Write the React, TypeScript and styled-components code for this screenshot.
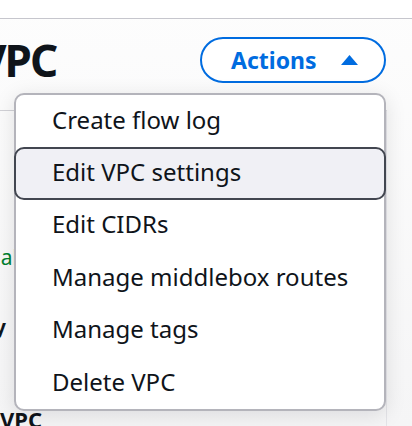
import styled, { createGlobalStyle } from 'styled-components'

const GlobalStyle = createGlobalStyle`
  html, body {
    margin: 0;
    padding: 0;
  }
  body {
    background: #f8f8f9;
    font-family: "Noto Sans", "Open Sans", sans-serif;
    color: #0f141a;
    overflow: hidden;
  }
`

const Page = styled.div`
  position: relative;
  width: 412px;
  height: 426px;
  overflow: hidden;
  background: linear-gradient(180deg, #fdfdfd 0%, #f5f5f6 100%);
`

const TopBar = styled.div`
  height: 18px;
  background: #ffffff;
  border-bottom: 1px solid #c6c6cd;
`

const HeaderRow = styled.div`
  display: flex;
  align-items: center;
  justify-content: space-between;
  height: 82px;
  padding-right: 26px;
`

const Title = styled.h1`
  margin: 0 0 0 -22px;
  font-size: 44px;
  font-weight: 700;
  letter-spacing: -2px;
  line-height: 1;
`

const ActionsButton = styled.button`
  display: flex;
  align-items: center;
  gap: 24px;
  box-sizing: border-box;
  width: 186px;
  height: 46px;
  padding: 0 0 0 29px;
  border: 2px solid #006ce0;
  border-radius: 23px;
  background: #ffffff;
  color: #006ce0;
  font-family: inherit;
  font-size: 23px;
  font-weight: 700;
`

const Caret = styled.svg`
  width: 17px;
  height: 10px;
`

const Panel = styled.div`
  margin: 9px 25px 0 0;
  height: 400px;
  border-top: 1px solid #d1d1d6;
  border-right: 1px solid #e4e4e8;
  display: flex;
  flex-direction: column;
`

const Status = styled.div`
  margin: 132px 0 0 -46px;
  font-size: 21px;
  color: #00802f;
  white-space: nowrap;
`

const Value = styled.div`
  margin: 42px 0 0 -76px;
  font-size: 20px;
  font-weight: 700;
  white-space: nowrap;
`

const SectionTitle = styled.div`
  margin: 64px 0 0 0;
  font-size: 22px;
  font-weight: 700;
  white-space: nowrap;
`

const Menu = styled.ul`
  position: absolute;
  top: 93px;
  left: 14px;
  box-sizing: border-box;
  width: 372px;
  margin: 0;
  padding: 0;
  list-style: none;
  background: #ffffff;
  border: 2px solid #b4b4bb;
  border-radius: 10px;
  box-shadow: 0 4px 20px 1px rgba(0, 7, 22, 0.1);
`

const MenuItem = styled.li<{ $active?: boolean }>`
  display: flex;
  align-items: center;
  box-sizing: border-box;
  height: 52.4px;
  margin: 0 ${(p) => (p.$active ? '-2px' : '0')};
  padding: 0 0 4px 36px;
  font-size: 24px;
  white-space: nowrap;
  border: ${(p) => (p.$active ? '2px solid #424650' : 'none')};
  border-radius: 10px;
  background: ${(p) => (p.$active ? '#f0f0f5' : 'transparent')};
`

const items = [
  'Create flow log',
  'Edit VPC settings',
  'Edit CIDRs',
  'Manage middlebox routes',
  'Manage tags',
  'Delete VPC',
]

export default function App() {
  return (
    <>
      <GlobalStyle />
      <Page>
        <TopBar />
        <HeaderRow>
          <Title>VPC</Title>
          <ActionsButton>
            Actions
            <Caret viewBox="0 0 17 10">
              <path d="M8.5 0 L17 10 L0 10 Z" fill="currentColor" />
            </Caret>
          </ActionsButton>
        </HeaderRow>
        <Panel>
          <Status>Available</Status>
          <Value>Tenancy</Value>
          <SectionTitle>VPC</SectionTitle>
        </Panel>
        <Menu>
          {items.map((label, i) => (
            <MenuItem key={label} $active={i === 1}>
              {label}
            </MenuItem>
          ))}
        </Menu>
      </Page>
    </>
  )
}
